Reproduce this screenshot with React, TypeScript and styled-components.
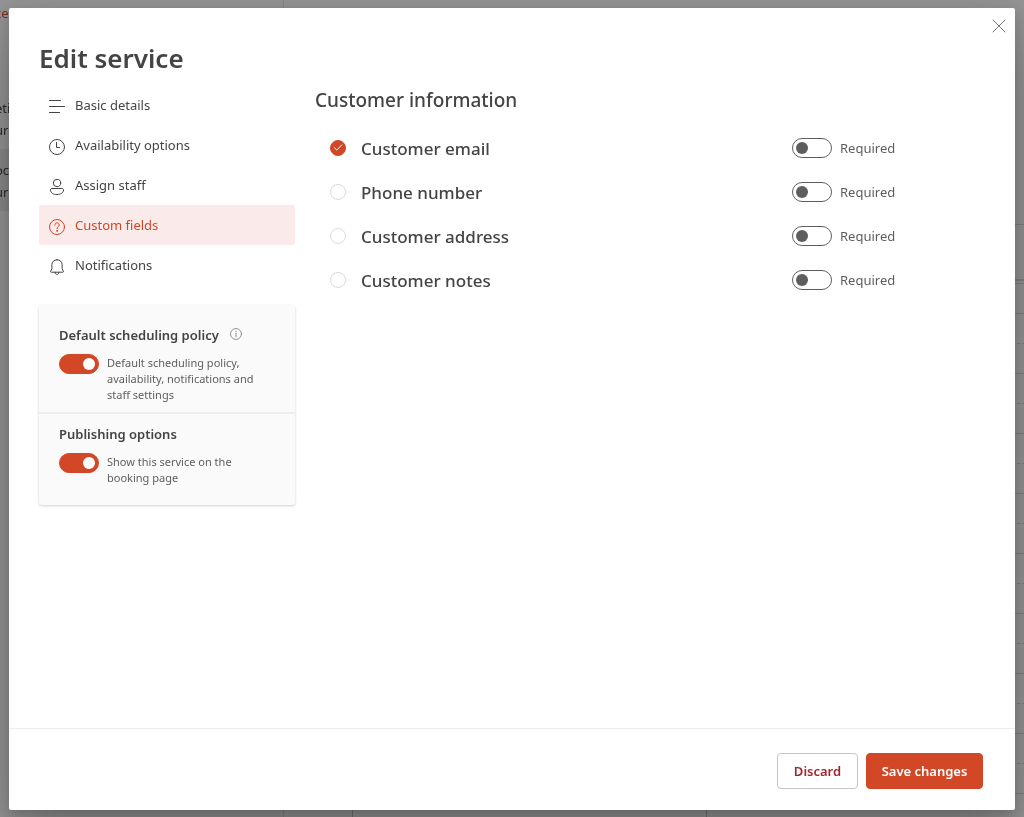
import React, { useState } from "react";
import styled, { createGlobalStyle, css } from "styled-components";

const GlobalStyle = createGlobalStyle`
  *, *::before, *::after { box-sizing: border-box; }
  body {
    margin: 0;
    background: #f3f3f3;
    color: #444;
    font-family: "Segoe UI", "Noto Sans", sans-serif;
    font-size: 13px;
    line-height: 20px;
  }
  h1, h2, h3, p, ul { margin: 0; padding: 0; }
  ul { list-style: none; }
  button { font-family: inherit; cursor: pointer; }
`;

/* ---------- Page behind the dialog ---------- */

const Page = styled.div`
  position: fixed;
  inset: 0;
  display: flex;
  overflow: hidden;
`;

const PageSidebar = styled.aside`
  flex: 0 0 284px;
  padding-top: 3px;
  text-indent: -5px;
  border-right: 1px solid #dcdcdc;
`;

const PageLink = styled.div`
  height: 64px;
  color: #d24726;
`;

const PageEntry = styled.div<{ $selected?: boolean }>`
  height: 62px;
  padding-top: 10px;
  line-height: 22px;
  color: #444;
  background: ${(p) => (p.$selected ? "#e2e2e2" : "transparent")};
`;

const PageEntryGap = styled.div`
  height: 20px;
`;

const Calendar = styled.main`
  flex: 1;
  display: flex;
  flex-direction: column;
`;

const CalendarHeader = styled.div<{ $height: number; $line: number }>`
  flex: none;
  height: ${(p) => p.$height}px;
  border-bottom: ${(p) => p.$line}px solid #cfcfcf;
`;

const CalendarGrid = styled.div`
  flex: 1;
  display: grid;
  grid-template-columns: 69px 354px 354px;
`;

const CalendarColumn = styled.div`
  border-right: 1px solid #bdbdbd;
`;

const CalendarSlot = styled.div<{ $half: boolean }>`
  height: 30px;
  border-bottom: 1px ${(p) => (p.$half ? "solid" : "dashed")} #cfcfcf;
`;

/* ---------- Dialog ---------- */

const Overlay = styled.div`
  position: relative;
  min-height: 100vh;
  padding: 8px 9px 7px;
  display: flex;
  background: rgba(0, 0, 0, 0.4);
`;

const Dialog = styled.form`
  position: relative;
  flex: 1;
  display: flex;
  flex-direction: column;
  background: #fff;
  border-radius: 2px;
  box-shadow: 0 26px 58px rgba(0, 0, 0, 0.22), 0 5px 14px rgba(0, 0, 0, 0.18);
`;

const CloseButton = styled.button`
  position: absolute;
  top: 2px;
  right: 0;
  width: 32px;
  height: 32px;
  padding: 0;
  display: grid;
  place-items: center;
  border: 0;
  background: transparent;
  color: #7a7876;
`;

const Title = styled.h1`
  padding: 32px 30px 9px;
  font-size: 26px;
  line-height: 36px;
  font-weight: 600;
  color: #444;
`;

const Body = styled.div`
  flex: 1;
  display: flex;
  gap: 20px;
  padding: 0 30px;
`;

const SideColumn = styled.div`
  flex: 0 0 256px;
`;

const NavButton = styled.button<{ $active: boolean }>`
  width: 100%;
  height: 40px;
  padding: 0 10px;
  display: flex;
  align-items: center;
  gap: 10px;
  border: 0;
  border-radius: 2px;
  font-size: 13px;
  line-height: 20px;
  text-align: left;
  color: ${(p) => (p.$active ? "#d24726" : "#444")};
  background: ${(p) => (p.$active ? "#faebea" : "transparent")};

  svg {
    margin-top: 4px;
  }
`;

const PolicyCard = styled.div`
  margin-top: 20px;
  background: #fafafa;
  border-radius: 3px;
  box-shadow: 0 1px 3px rgba(0, 0, 0, 0.18);
`;

const PolicySection = styled.section`
  padding: 20px 20px 9px;

  & + & {
    padding: 10px 20px 19px;
    border-top: 2px solid #ededed;
  }
`;

const PolicyHeading = styled.h3`
  display: flex;
  align-items: center;
  gap: 11px;
  font-size: 13px;
  line-height: 20px;
  font-weight: 600;
  color: #444;

  svg {
    margin-bottom: 2px;
  }
`;

const PolicyOption = styled.label`
  display: flex;
  gap: 8px;
  margin-top: 9px;
  font-size: 11px;
  line-height: 16px;
  color: #605e5c;
  cursor: pointer;
`;

const OptionText = styled.span`
  max-width: 160px;
  padding-top: 1px;
`;

const Switch = styled.input.attrs({ type: "checkbox", role: "switch" })`
  appearance: none;
  flex: none;
  width: 40px;
  height: 20px;
  margin: 0;
  padding: 0 3px;
  display: flex;
  align-items: center;
  border: 1px solid #605e5c;
  border-radius: 10px;
  background: #fff;
  cursor: pointer;

  &::before {
    content: "";
    width: 12px;
    height: 12px;
    border-radius: 50%;
    background: #605e5c;
  }

  &:checked {
    justify-content: flex-end;
    border-color: #d24726;
    background: #d24726;
  }

  &:checked::before {
    background: #fff;
  }
`;

const FieldsColumn = styled.section`
  flex: 1;
  max-width: 581px;
`;

const FieldsHeading = styled.h2`
  padding: 2px 0 13px;
  font-size: 19px;
  line-height: 26px;
  font-weight: 500;
  color: #444;
`;

const FieldRow = styled.li`
  height: 44px;
  padding-left: 15px;
  display: grid;
  grid-template-columns: 1fr 104px;
  align-items: center;
`;

const FieldLabel = styled.label`
  display: flex;
  align-items: center;
  gap: 15px;
  font-size: 17px;
  line-height: 24px;
  font-weight: 500;
  color: #444;
  cursor: pointer;
`;

const FieldName = styled.span`
  padding-top: 1px;
`;

const TickWrap = styled.span`
  display: grid;
  width: 16px;
  height: 16px;

  > * {
    grid-area: 1 / 1;
  }

  svg {
    pointer-events: none;
  }
`;

const Tick = styled.input.attrs({ type: "checkbox" })`
  appearance: none;
  width: 16px;
  height: 16px;
  margin: 0;
  border: 1px solid #dcdcdc;
  border-radius: 50%;
  background: #fff;
  cursor: pointer;

  &:checked {
    border-color: #d24726;
    background: #d24726;
  }
`;

const RequiredLabel = styled.label`
  display: flex;
  align-items: center;
  gap: 8px;
  font-size: 13px;
  line-height: 20px;
  color: #605e5c;
  cursor: pointer;
`;

const Footer = styled.footer`
  display: flex;
  justify-content: flex-end;
  gap: 8px;
  padding: 24px 32px 21px;
  border-top: 1px solid #ededed;
`;

const FooterButton = styled.button<{ $primary?: boolean }>`
  height: 36px;
  min-width: 81px;
  padding: 0 14px;
  border: 1px solid #c8c6c4;
  border-radius: 4px;
  font-size: 13px;
  line-height: 20px;
  font-weight: 600;
  color: #a4262c;
  background: #fff;

  ${(p) =>
    p.$primary &&
    css`
      min-width: 117px;
      border-color: #d24726;
      color: #fff;
      background: #d24726;
    `}
`;

/* ---------- Icons ---------- */

const Icon = ({ size = 16, children }: { size?: number; children: React.ReactNode }) => (
  <svg
    width={size}
    height={size}
    viewBox="0 0 16 16"
    fill="none"
    stroke="currentColor"
    strokeWidth="1"
    strokeLinecap="round"
    strokeLinejoin="round"
    aria-hidden="true"
  >
    {children}
  </svg>
);

const LinesIcon = () => (
  <Icon>
    <path d="M.5 1.5h11M.5 7.5h15M.5 13.5h10" />
  </Icon>
);

const ClockIcon = () => (
  <Icon>
    <circle cx="8" cy="8" r="7.5" />
    <path d="M7.5 3.5v5h3" />
  </Icon>
);

const PersonIcon = () => (
  <Icon>
    <circle cx="8" cy="4" r="3.7" />
    <path d="M3 9.5h10c1 0 1.5.6 1.5 1.5 0 2.7-2.7 4.5-6.5 4.5S1.5 13.7 1.5 11c0-.9.5-1.5 1.5-1.5z" />
  </Icon>
);

const QuestionIcon = () => (
  <Icon>
    <circle cx="8" cy="8" r="7.5" />
    <path d="M5.8 6.1c0-1.3 1-2.3 2.2-2.3s2.2.9 2.2 2.2c0 1.7-2.2 1.9-2.2 3.8" />
    <circle cx="8" cy="11.9" r=".4" fill="currentColor" />
  </Icon>
);

const BellIcon = () => (
  <Icon>
    <path d="M8 .7c-3 0-5.1 2.2-5.1 5v4L1.5 12.4c-.1.4.1.8.6.8h11.8c.5 0 .7-.4.6-.8l-1.4-2.7v-4c0-2.800-2.100-5-5.100-5z" />
    <path d="M6 13.3c0 1.2.9 2.1 2 2.1s2-.9 2-2.1" />
  </Icon>
);

const InfoIcon = () => (
  <Icon size={12}>
    <circle cx="8" cy="8" r="7.3" stroke="#8a8886" strokeWidth="1.2" />
    <path d="M8 7v4.6M8 4.2v.6" stroke="#8a8886" strokeWidth="1.3" />
  </Icon>
);

const CheckIcon = () => (
  <Icon>
    <path d="M4.4 7.7l2.4 2.4 5-5.2" stroke="#fff" />
  </Icon>
);

const CloseIcon = () => (
  <Icon>
    <path d="M2 2l12 12M14 2L2 14" />
  </Icon>
);

/* ---------- Content ---------- */

const sections = [
  { name: "Basic details", icon: <LinesIcon /> },
  { name: "Availability options", icon: <ClockIcon /> },
  { name: "Assign staff", icon: <PersonIcon /> },
  { name: "Custom fields", icon: <QuestionIcon /> },
  { name: "Notifications", icon: <BellIcon /> },
];

const fields = ["Customer email", "Phone number", "Customer address", "Customer notes"];

const slots = Array.from({ length: 20 }, (_, i) => i);

const Backdrop = () => (
  <Page aria-hidden="true">
    <PageSidebar>
      <PageLink>ce</PageLink>
      <PageEntryGap />
      <PageEntry>
        <div>eti</div>
        <div>ur</div>
      </PageEntry>
      <PageEntry $selected>
        <div>oc</div>
        <div>ur</div>
      </PageEntry>
    </PageSidebar>
    <Calendar>
      <CalendarHeader $height={225} $line={1} />
      <CalendarHeader $height={56} $line={2} />
      <CalendarGrid>
        {[0, 1, 2].map((column) => (
          <CalendarColumn key={column}>
            <CalendarHeader $height={3} $line={1} />
            {slots.map((slot) => (
              <CalendarSlot key={slot} $half={slot % 2 === 0} />
            ))}
          </CalendarColumn>
        ))}
      </CalendarGrid>
    </Calendar>
  </Page>
);

export default function App() {
  const [active, setActive] = useState("Custom fields");
  const [chosen, setChosen] = useState<string[]>(["Customer email"]);

  const toggle = (field: string) =>
    setChosen((list) =>
      list.includes(field) ? list.filter((f) => f !== field) : [...list, field]
    );

  return (
    <>
      <GlobalStyle />
      <Backdrop />
      <Overlay>
        <Dialog role="dialog" aria-labelledby="dialog-title" onSubmit={(e) => e.preventDefault()}>
          <CloseButton type="button" aria-label="Close">
            <CloseIcon />
          </CloseButton>
          <Title id="dialog-title">Edit service</Title>
          <Body>
            <SideColumn>
              <nav>
                {sections.map(({ name, icon }) => (
                  <NavButton
                    key={name}
                    type="button"
                    $active={name === active}
                    onClick={() => setActive(name)}
                  >
                    {icon}
                    {name}
                  </NavButton>
                ))}
              </nav>
              <PolicyCard>
                <PolicySection>
                  <PolicyHeading>
                    Default scheduling policy
                    <InfoIcon />
                  </PolicyHeading>
                  <PolicyOption>
                    <Switch defaultChecked />
                    <OptionText>
                      Default scheduling policy, availability, notifications and staff settings
                    </OptionText>
                  </PolicyOption>
                </PolicySection>
                <PolicySection>
                  <PolicyHeading>Publishing options</PolicyHeading>
                  <PolicyOption>
                    <Switch defaultChecked />
                    <OptionText>Show this service on the booking page</OptionText>
                  </PolicyOption>
                </PolicySection>
              </PolicyCard>
            </SideColumn>
            <FieldsColumn>
              <FieldsHeading>Customer information</FieldsHeading>
              <ul>
                {fields.map((field) => (
                  <FieldRow key={field}>
                    <FieldLabel>
                      <TickWrap>
                        <Tick checked={chosen.includes(field)} onChange={() => toggle(field)} />
                        {chosen.includes(field) && <CheckIcon />}
                      </TickWrap>
                      <FieldName>{field}</FieldName>
                    </FieldLabel>
                    <RequiredLabel>
                      <Switch />
                      Required
                    </RequiredLabel>
                  </FieldRow>
                ))}
              </ul>
            </FieldsColumn>
          </Body>
          <Footer>
            <FooterButton type="button">Discard</FooterButton>
            <FooterButton type="submit" $primary>
              Save changes
            </FooterButton>
          </Footer>
        </Dialog>
      </Overlay>
    </>
  );
}
